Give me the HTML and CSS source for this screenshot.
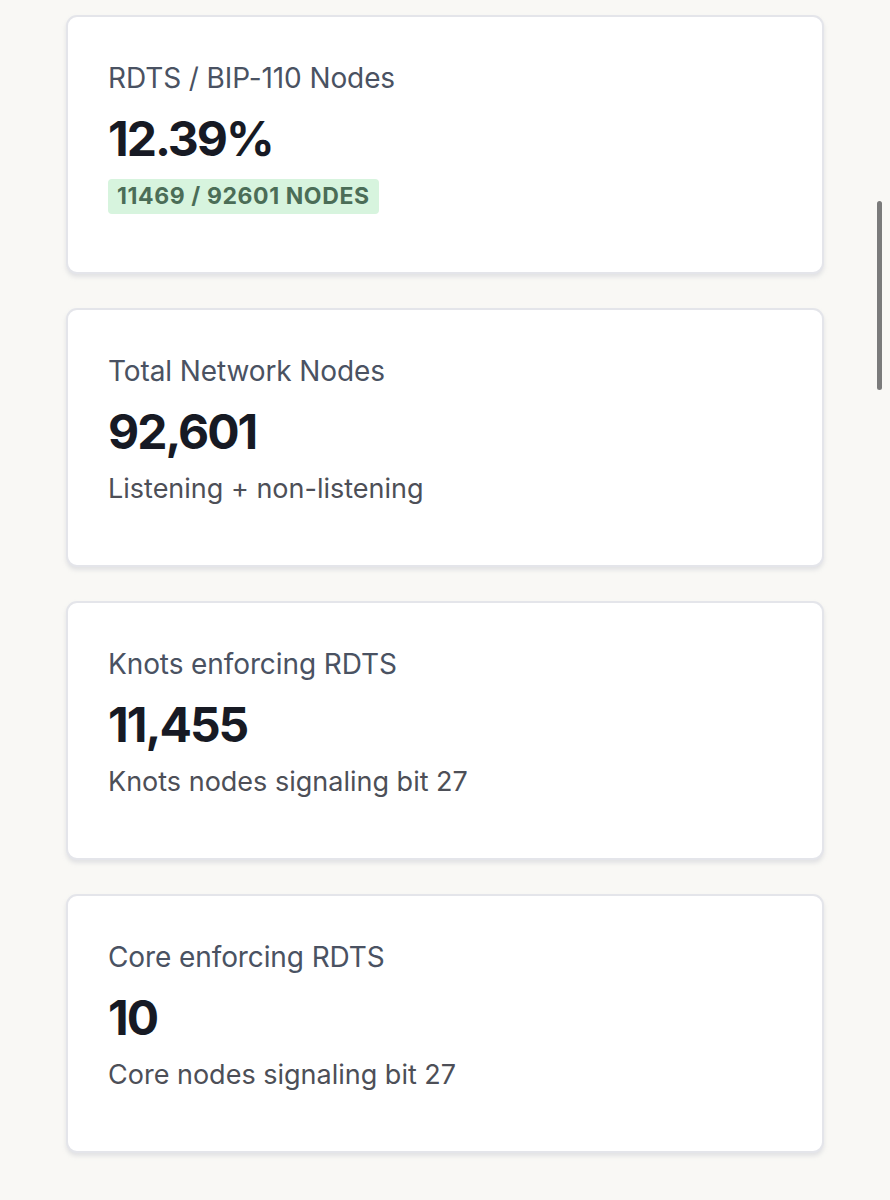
FILE: index.html
```html
<!DOCTYPE html>
<html lang="en">
<head>
<meta charset="utf-8">
<title>RDTS Nodes</title>
<link rel="stylesheet" href="styles.css">
</head>
<body>
<main class="stats">
  <section class="card">
    <div class="label">RDTS / BIP-110 Nodes</div>
    <div class="value">12.39%</div>
    <div class="badge">11469 / 92601 NODES</div>
  </section>
  <section class="card">
    <div class="label">Total Network Nodes</div>
    <div class="value">92,601</div>
    <div class="note">Listening + non-listening</div>
  </section>
  <section class="card">
    <div class="label">Knots enforcing RDTS</div>
    <div class="value">11,455</div>
    <div class="note">Knots nodes signaling bit 27</div>
  </section>
  <section class="card">
    <div class="label">Core enforcing RDTS</div>
    <div class="value">10</div>
    <div class="note">Core nodes signaling bit 27</div>
  </section>
</main>
<div class="scrollbar"></div>
</body>
</html>
```

FILE: styles.css
```css
* { box-sizing: border-box; }

html, body {
  margin: 0;
  height: 100%;
  background: #f9f8f5;
  font-family: Inter, "Noto Sans", "Liberation Sans", sans-serif;
  overflow: hidden;
}

.stats {
  display: flex;
  flex-direction: column;
  gap: 34px;
  padding: 15px 66px 0 66px;
}

.card {
  height: 259px;
  background: #ffffff;
  border: 2px solid #e4e5ea;
  border-radius: 11px;
  box-shadow: 0 3px 4px rgba(180, 182, 195, 0.35);
  padding: 44px 40px 0 40px;
}

.label {
  font-size: 28px;
  line-height: 34px;
  color: #4a5262;
  letter-spacing: -0.1px;
}

.value {
  margin-top: 16px;
  font-size: 48px;
  line-height: 56px;
  font-weight: 700;
  color: #171a24;
  letter-spacing: -2px;
}

.note {
  margin-top: 12px;
  font-size: 27px;
  line-height: 34px;
  color: #4d4f57;
}

.badge {
  display: inline-block;
  margin-top: 12px;
  padding: 0 9px;
  height: 35px;
  line-height: 35px;
  border-radius: 4px;
  background: #d7f4de;
  color: #4b6d57;
  font-size: 23px;
  font-weight: 700;
  letter-spacing: 0.6px;
}

.scrollbar {
  position: fixed;
  top: 201px;
  left: 877px;
  width: 5px;
  height: 189px;
  border-radius: 3px;
  background: #7b7b7b;
}
```
